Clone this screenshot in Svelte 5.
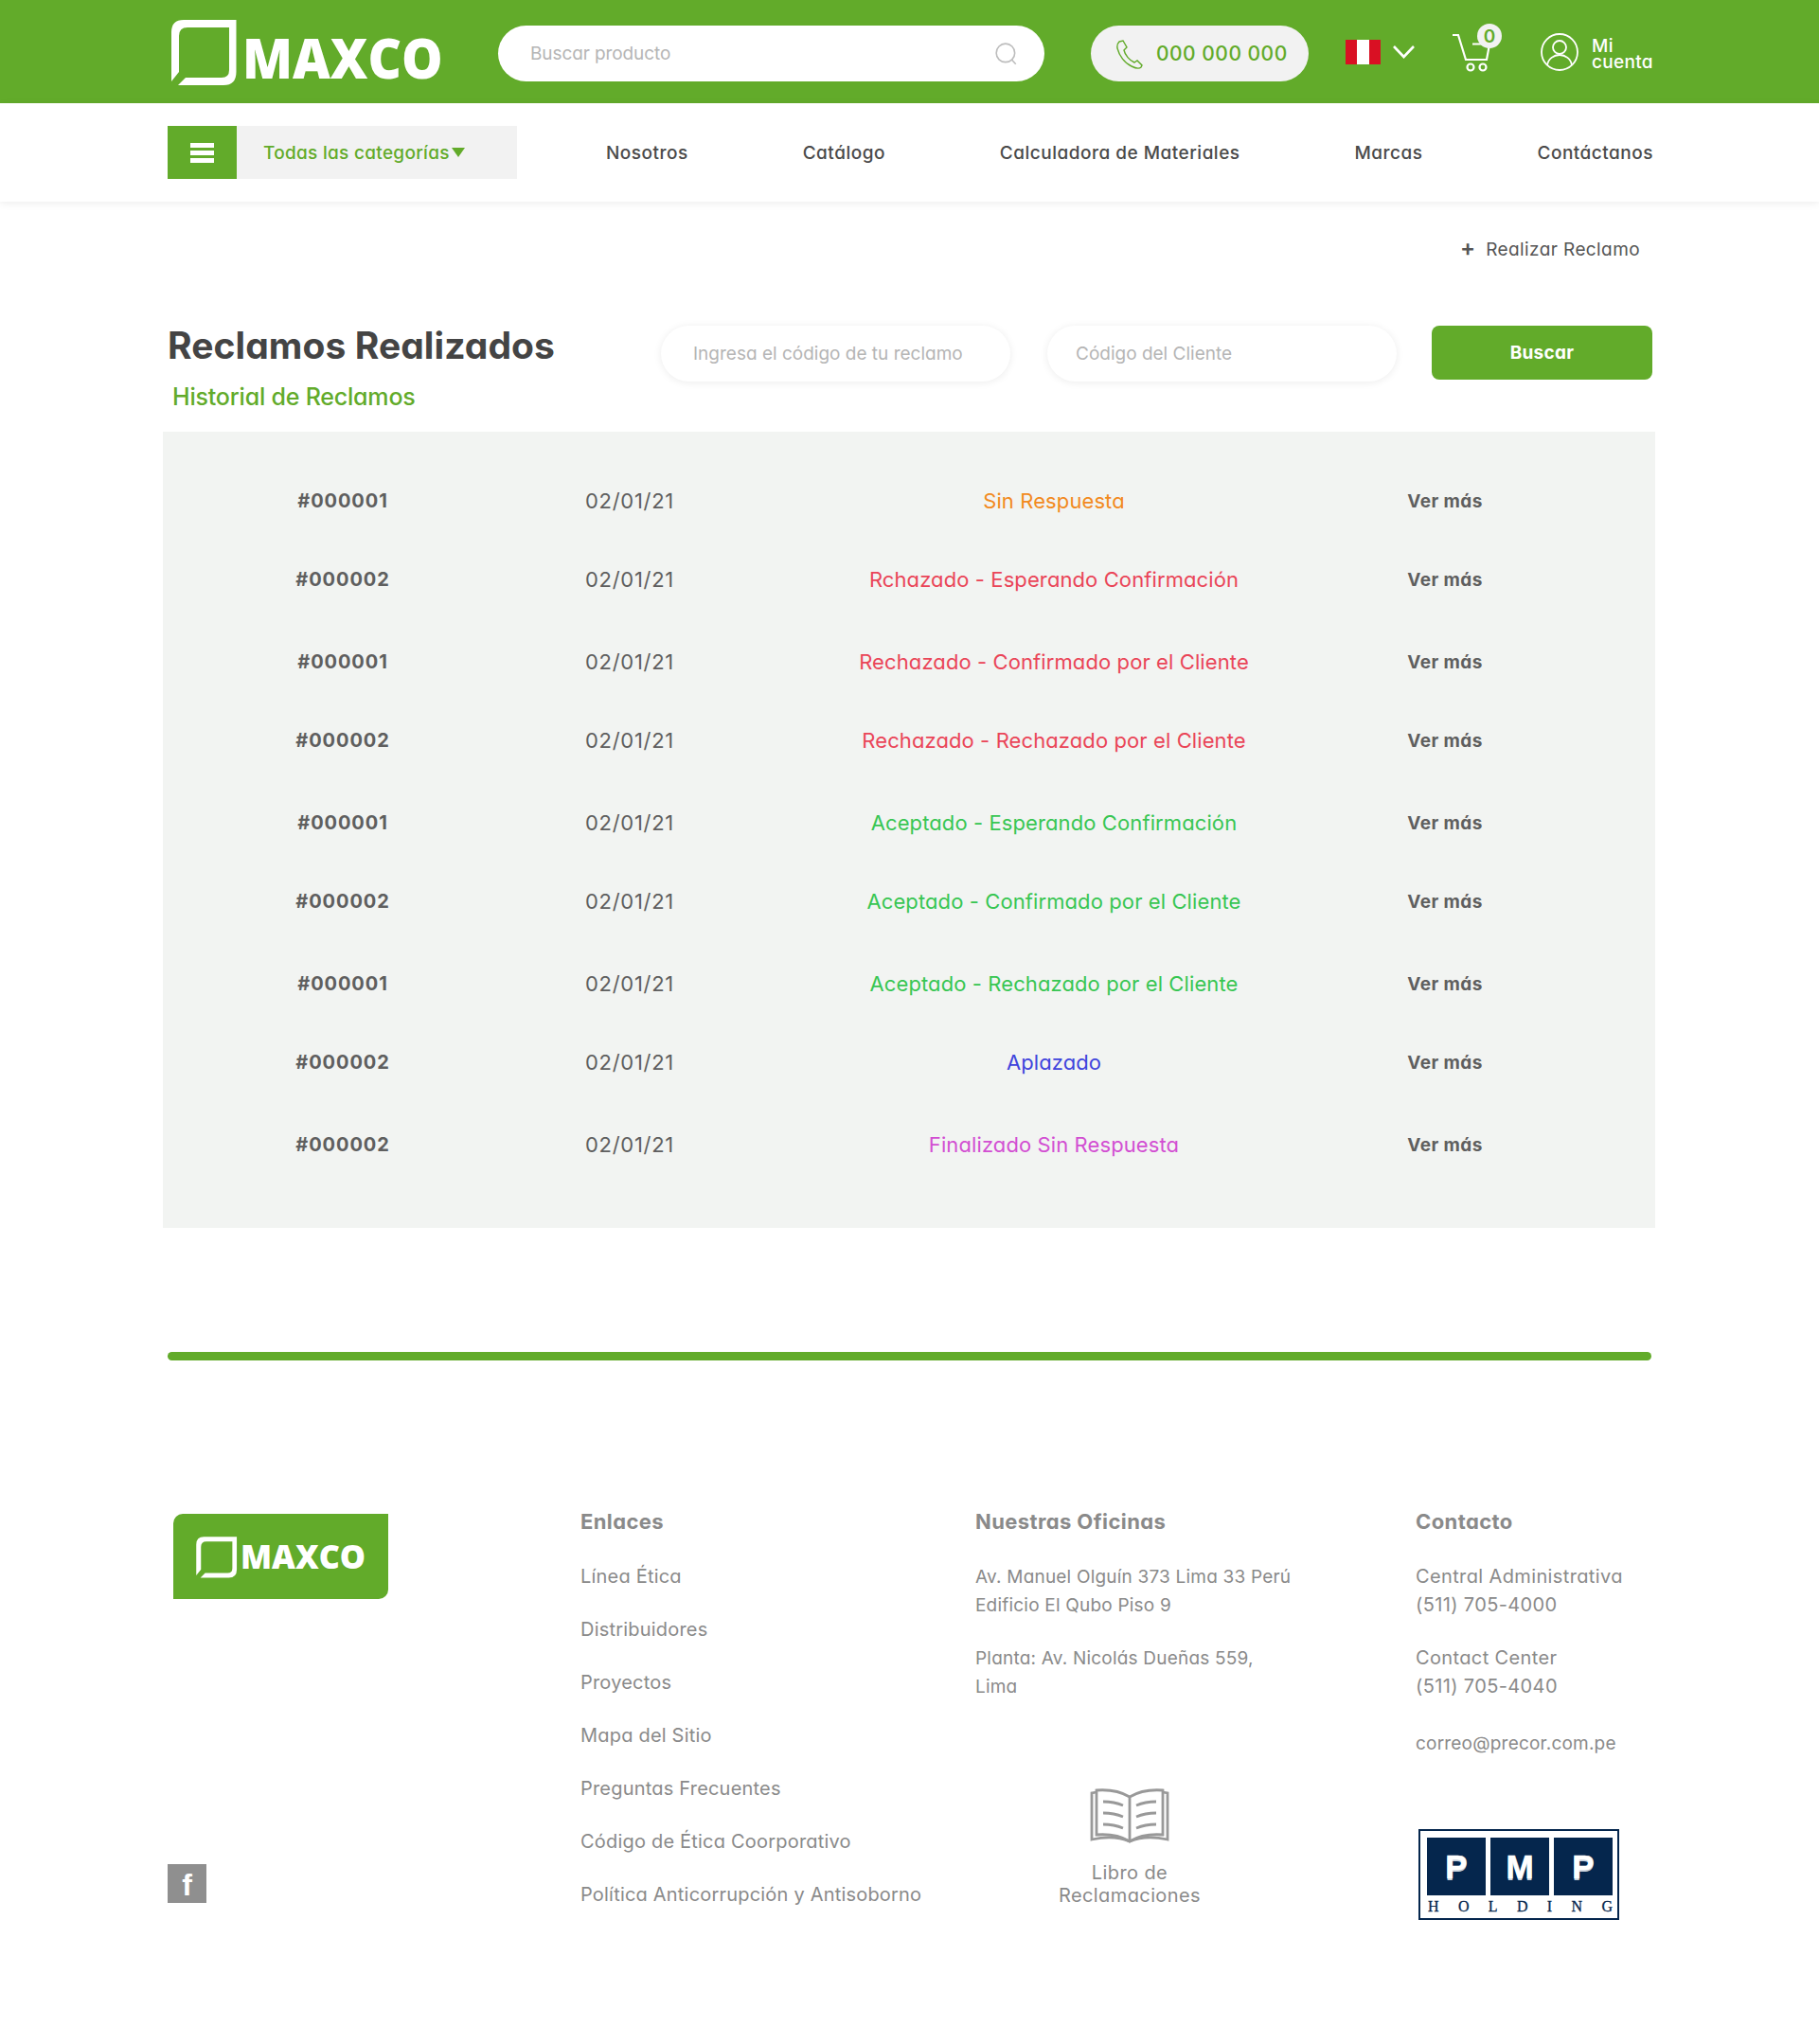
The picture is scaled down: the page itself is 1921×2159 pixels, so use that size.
<script>
  const rows = [
    ['#000001', 'Sin Respuesta', 'orange'],
    ['#000002', 'Rchazado - Esperando Confirmación', 'red'],
    ['#000001', 'Rechazado - Confirmado por el Cliente', 'red'],
    ['#000002', 'Rechazado - Rechazado por el Cliente', 'red'],
    ['#000001', 'Aceptado - Esperando Confirmación', 'green'],
    ['#000002', 'Aceptado - Confirmado por el Cliente', 'green'],
    ['#000001', 'Aceptado - Rechazado por el Cliente', 'green'],
    ['#000002', 'Aplazado', 'blue'],
    ['#000002', 'Finalizado Sin Respuesta', 'pink']
  ];
  const links = ['Línea Ética', 'Distribuidores', 'Proyectos', 'Mapa del Sitio', 'Preguntas Frecuentes', 'Código de Ética Coorporativo', 'Política Anticorrupción y Antisoborno'];
  const nav = ['Nosotros', 'Catálogo', 'Calculadora de Materiales', 'Marcas', 'Contáctanos'];
  const mark = 'M24 11H79.500V66Q79.500 80 66 80H18L26 72H64Q72 72 72 64V19H28Q19 19 19 28V66L11 76V24Q11 11 24 11Z';
</script>

<div class="page">
  <header class="top">
    <div class="logo">
      <svg class="mark" viewBox="9 9 72 72" width="72" height="72"><path d={mark} fill="#fff"/></svg>
      <span class="logo-text">MAXCO</span>
    </div>
    <div class="search">
      <span>Buscar producto</span>
      <svg viewBox="0 0 24 24" width="26" height="26" fill="none" stroke="#bdbdbd" stroke-width="1.500"><circle cx="11" cy="11" r="9"/><path d="M17 17.500l4 4.500"/></svg>
    </div>
    <div class="phone">
      <svg viewBox="0 0 32 32" width="32" height="32" fill="none" stroke="#62ab2a" stroke-width="1.400"><path d="M5 3 9 2l4 7-3 3c1 5 6 11 11 13l3-2 5 5-1 2c-2 2-6 1-10-1C11 26 5 18 3 10 2.500 7 3 5 5 3Z"/></svg>
      <span>000 000 000</span>
    </div>
    <div class="flag"><i></i><i></i><i></i></div>
    <svg class="chev" viewBox="0 0 23 14" width="23" height="14" fill="none" stroke="#fff" stroke-width="2.600"><path d="M1 1l10.500 11L22 1"/></svg>
    <div class="cart">
      <svg viewBox="0 0 52 52" width="52" height="52" fill="none" stroke="#fff" stroke-width="2.200">
        <path d="M0 13h6l8 26h22l3-16M21 22.500h10"/>
        <circle cx="19" cy="47" r="3.500"/><circle cx="32" cy="47" r="3.500"/>
      </svg>
      <span class="badge">0</span>
    </div>
    <div class="acct">
      <svg viewBox="0 0 40 40" width="40" height="40" fill="none" stroke="#fff" stroke-width="1.800"><circle cx="20" cy="20" r="19"/><circle cx="20" cy="15" r="7"/><path d="M7 34c1-7 7-11 13-11s12 4 13 11"/></svg>
      <span>Mi<br/>cuenta</span>
    </div>
  </header>

  <nav class="menu">
    <div class="cats">
      <div class="burger"><i></i><i></i><i></i></div>
      <div class="cat-label">Todas las categorías<span class="tri"></span></div>
    </div>
    <ul class="links">
      {#each nav as n}<li>{n}</li>{/each}
    </ul>
  </nav>

  <main>
    <div class="claim"><span class="plus">+</span> Realizar Reclamo</div>
    <section class="heading">
      <div class="titles">
        <h1>Reclamos Realizados</h1>
        <h2>Historial de Reclamos</h2>
      </div>
      <div class="field f1">Ingresa el código de tu reclamo</div>
      <div class="field f2">Código del Cliente</div>
      <button class="go">Buscar</button>
    </section>
    <section class="table">
      {#each rows as r}
        <div class="row">
          <b class="id">{r[0]}</b>
          <span class="date">02/01/21</span>
          <span class="st {r[2]}">{r[1]}</span>
          <b class="more">Ver más</b>
        </div>
      {/each}
    </section>
    <div class="rule"></div>
  </main>

  <footer>
    <div class="col brand">
      <div class="flogo">
        <svg viewBox="9 9 72 72" width="45" height="45"><path d={mark} fill="#fff"/></svg>
        <span>MAXCO</span>
      </div>
      <div class="fb">f</div>
    </div>
    <div class="col enl">
      <h3>Enlaces</h3>
      <ul>{#each links as l}<li>{l}</li>{/each}</ul>
    </div>
    <div class="col ofi">
      <h3>Nuestras Oficinas</h3>
      <p>Av. Manuel Olguín 373 Lima 33 Perú<br/>Edificio El Qubo Piso 9</p>
      <p>Planta: Av. Nicolás Dueñas 559,<br/>Lima</p>
      <div class="book">
        <svg viewBox="0 0 84 60" width="84" height="60" fill="none" stroke="#999" stroke-width="2.800">
          <path d="M7 5 2 6v49c14-3 28-3 40 2 12-5 26-5 40-2V6l-5-1"/>
          <path d="M42 10C32 4 20 2 7 3v47c13-1 25 1 35 7 10-6 22-8 35-7V3C64 2 52 4 42 10v46"/>
          <path d="M14 15c6 0 14 1 21 4M14 27c6 0 14 1 21 4M14 39c6 0 14 1 21 4M49 19c7-3 15-4 21-4M49 31c7-3 15-4 21-4M49 43c7-3 15-4 21-4"/>
        </svg>
        <span>Libro de<br/>Reclamaciones</span>
      </div>
    </div>
    <div class="col con">
      <h3>Contacto</h3>
      <p>Central Administrativa<br/>(511) 705-4000</p>
      <p>Contact Center<br/>(511) 705-4040</p>
      <p class="mail">correo@precor.com.pe</p>
      <div class="pmp">
        <div class="tiles"><b>P</b><b>M</b><b>P</b></div>
        <div class="hold"><span>H</span><span>O</span><span>L</span><span>D</span><span>I</span><span>N</span><span>G</span></div>
      </div>
    </div>
  </footer>
</div>

<style>
  :global(body) { margin: 0; background: #fff; }
  .page {
    font-family: Inter, "Liberation Sans", sans-serif;
    font-feature-settings: "cv11";
    color: #555;
    width: 1921px;
    height: 2159px;
    overflow: hidden;
  }
  ul { list-style: none; margin: 0; padding: 0; }
  h1, h2, h3, p { margin: 0; }

  .top {
    height: 109px;
    background: #62ab2a;
    display: flex;
    align-items: center;
    padding: 4px 0 0 179px;
    box-sizing: border-box;
  }
  .logo { display: flex; align-items: center; width: 347px; height: 72px; margin-bottom: 3px; flex: none; }
  .mark { flex: none; }
  .logo-text {
    font-family: "Open Sans", sans-serif;
    font-weight: 800;
    font-size: 58px;
    line-height: 58px;
    color: #fff;
    margin-left: 5px;
    margin-top: 11px;
    transform: scaleX(.945);
    transform-origin: left;
  }
  .search {
    width: 577px;
    height: 59px;
    background: #fff;
    border-radius: 30px;
    display: flex;
    align-items: center;
    justify-content: space-between;
    padding: 0 27px 0 34px;
    box-sizing: border-box;
    color: #b5b5b5;
    font-size: 19px;
    letter-spacing: -.1px;
    flex: none;
  }
  .phone {
    width: 230px;
    height: 59px;
    margin-left: 49px;
    background: #f2f2f2;
    border-radius: 30px;
    display: flex;
    align-items: center;
    gap: 12px;
    padding-left: 25px;
    box-sizing: border-box;
    color: #62ab2a;
    font-size: 21px;
    letter-spacing: .5px;
    font-weight: 500;
    flex: none;
  }
  .flag { display: flex; width: 37px; height: 26px; margin: 0 0 3px 39px; flex: none; }
  .flag i { flex: 1; background: #d91023; }
  .flag i:nth-child(2) { background: #fff; }
  .chev { margin: 0 0 3px 13px; flex: none; }
  .cart { position: relative; width: 52px; height: 52px; margin: 0 0 13px 40px; flex: none; }
  .badge {
    position: absolute;
    left: 26px;
    top: 1px;
    width: 26px;
    height: 26px;
    border-radius: 50%;
    background: #f2f2f2;
    color: #62ab2a;
    font-size: 19px;
    font-weight: 600;
    display: flex;
    align-items: center;
    justify-content: center;
  }
  .acct { display: flex; align-items: center; gap: 14px; margin: 0 0 3px 41px; color: #fff; font-size: 19px; line-height: 17px; font-weight: 500; letter-spacing: .3px; }
  .acct span { margin-top: 4px; }

  .menu {
    height: 104px;
    display: flex;
    align-items: center;
    padding: 0 175px 0 177px;
    box-sizing: border-box;
    box-shadow: 0 2px 8px rgba(0, 0, 0, .07);
  }
  .cats { display: flex; width: 369px; height: 56px; background: #f2f2f2; flex: none; }
  .burger { width: 73px; background: #62ab2a; display: flex; flex-direction: column; justify-content: center; gap: 3px; align-items: center; }
  .burger i { width: 25px; height: 5px; background: #fff; }
  .cat-label { display: flex; align-items: center; padding-left: 28px; color: #62ab2a; font-size: 19px; font-weight: 500; letter-spacing: .3px; }
  .tri { width: 0; height: 0; border: 7px solid transparent; border-top: 10px solid #62ab2a; border-bottom: 0; margin-left: 2px; }
  .links { flex: 1; display: flex; justify-content: space-between; margin-left: 94px; font-size: 19px; font-weight: 500; color: #4a4a4a; letter-spacing: .5px; }

  main { padding: 0 173px 0 172px; }
  .claim { height: 101px; padding: 35px 16px 0 0; box-sizing: border-box; text-align: right; font-size: 19px; line-height: 28px; color: #555; letter-spacing: .4px; }
  .plus { font-size: 24px; margin-right: 5px; font-weight: 600; }
  .heading { display: flex; height: 142px; align-items: flex-start; padding-left: 5px; }
  .titles { width: 521px; padding-top: 27px; }
  h1 { font-size: 39px; line-height: 48px; font-weight: 700; color: #444; letter-spacing: .07px; }
  h2 { font-size: 25px; line-height: 30px; font-weight: 500; color: #62ab2a; margin: 15px 0 0 5px; letter-spacing: -.2px; }
  .field {
    width: 369px;
    height: 59px;
    border-radius: 30px;
    background: #fff;
    box-shadow: 0 1px 8px rgba(0, 0, 0, .08);
    color: #b5b5b5;
    font-size: 19px;
    display: flex;
    align-items: center;
    box-sizing: border-box;
    margin-top: 30px;
  }
  .f1 { padding-left: 34px; }
  .f2 { padding-left: 30px; margin-left: 39px; }
  .go {
    width: 233px;
    height: 57px;
    margin: 30px 0 0 37px;
    border: 0;
    border-radius: 8px;
    background: #62ab2a;
    color: #fff;
    font: inherit;
    font-size: 19px;
    font-weight: 700;
    letter-spacing: .3px;
  }
  .table { background: #f2f4f2; height: 841px; padding-top: 30.5px; box-sizing: border-box; width: 1576px; }
  .row {
    height: 85px;
    display: grid;
    grid-template-columns: 380px 226px 670px 156px;
    align-items: center;
    text-align: center;
    font-size: 22px;
    letter-spacing: .1px;
    box-sizing: border-box;
  }
  .row:nth-child(even) { padding-bottom: 4px; }
  .id, .more { font-weight: 700; color: #5f5f5f; }
  .more { font-size: 19px; letter-spacing: .4px; }
  .id { font-size: 20px; letter-spacing: .9px; }
  .date { color: #5f5f5f; letter-spacing: .7px; }
  .orange { color: #f28a1e; }
  .red { color: #ea4558; }
  .green { color: #38c653; }
  .blue { color: #3f44dc; }
  .pink { color: #d24fd2; }
  .rule { height: 9px; background: #62ab2a; margin: 131px 4px 0 5px; border-radius: 5px; }

  footer { position: relative; display: flex; padding-left: 177px; margin-top: 157px; color: #8a8a8a; font-size: 19px; line-height: 30px; }
  .col { flex: none; }
  .brand { width: 436px; height: 440px; position: relative; }
  .flogo {
    width: 227px;
    height: 90px;
    margin: 5px 0 0 6px;
    background: #62ab2a;
    border-radius: 10px 0 10px 0;
    display: flex;
    align-items: center;
    padding-left: 23px;
    box-sizing: border-box;
    color: #fff;
    font-family: "Open Sans", sans-serif;
    font-weight: 800;
    font-size: 36px;
  }
  .flogo span { margin-left: 3px; transform: scaleX(.95); transform-origin: left; }
  .fb { position: absolute; left: 0; top: 375px; width: 41px; height: 41px; background: #8f8f8f; color: #fff; font: 700 32px/44px "Liberation Sans", sans-serif; text-align: center; }
  h3 { font-size: 22px; line-height: 30px; font-weight: 700; color: #8a8a8a; margin: -2px 0 29px; letter-spacing: .4px; }
  .enl { width: 417px; font-size: 20px; letter-spacing: .2px; }
  .enl ul { margin-top: -1px; }
  .enl li { height: 56px; }
  .ofi { width: 465px; position: relative; letter-spacing: .2px; }
  .ofi p, .con p { margin-bottom: 26px; }
  .con p { font-size: 20px; letter-spacing: .37px; position: relative; top: -1px; }
  .con p.mail { font-size: 19px; letter-spacing: .2px; margin-top: 31px; }
  .book { position: absolute; left: 60px; top: 294px; width: 206px; text-align: center; line-height: 24px; display: flex; flex-direction: column; align-items: center; gap: 18px; font-size: 20px; letter-spacing: .4px; }
  .con { position: relative; width: 250px; }
  .pmp { position: absolute; left: 3px; top: 338px; width: 212px; height: 96px; border: 2px solid #05264d; box-sizing: border-box; padding: 7px 5px 0 7px; }
  .tiles { display: flex; gap: 5px; }
  .tiles b { flex: 1; height: 61px; background: #05264d; color: #fff; font: 900 35px/61px "Liberation Sans", sans-serif; text-align: center; text-shadow: 0 2px 0 #c4ceda; -webkit-text-stroke: .6px #fff; }
  .hold { display: flex; justify-content: space-between; color: #05264d; font: 400 16px/18px "Liberation Serif", serif; -webkit-text-stroke: .3px #05264d; margin: 3px 0 0 1px; }
</style>
